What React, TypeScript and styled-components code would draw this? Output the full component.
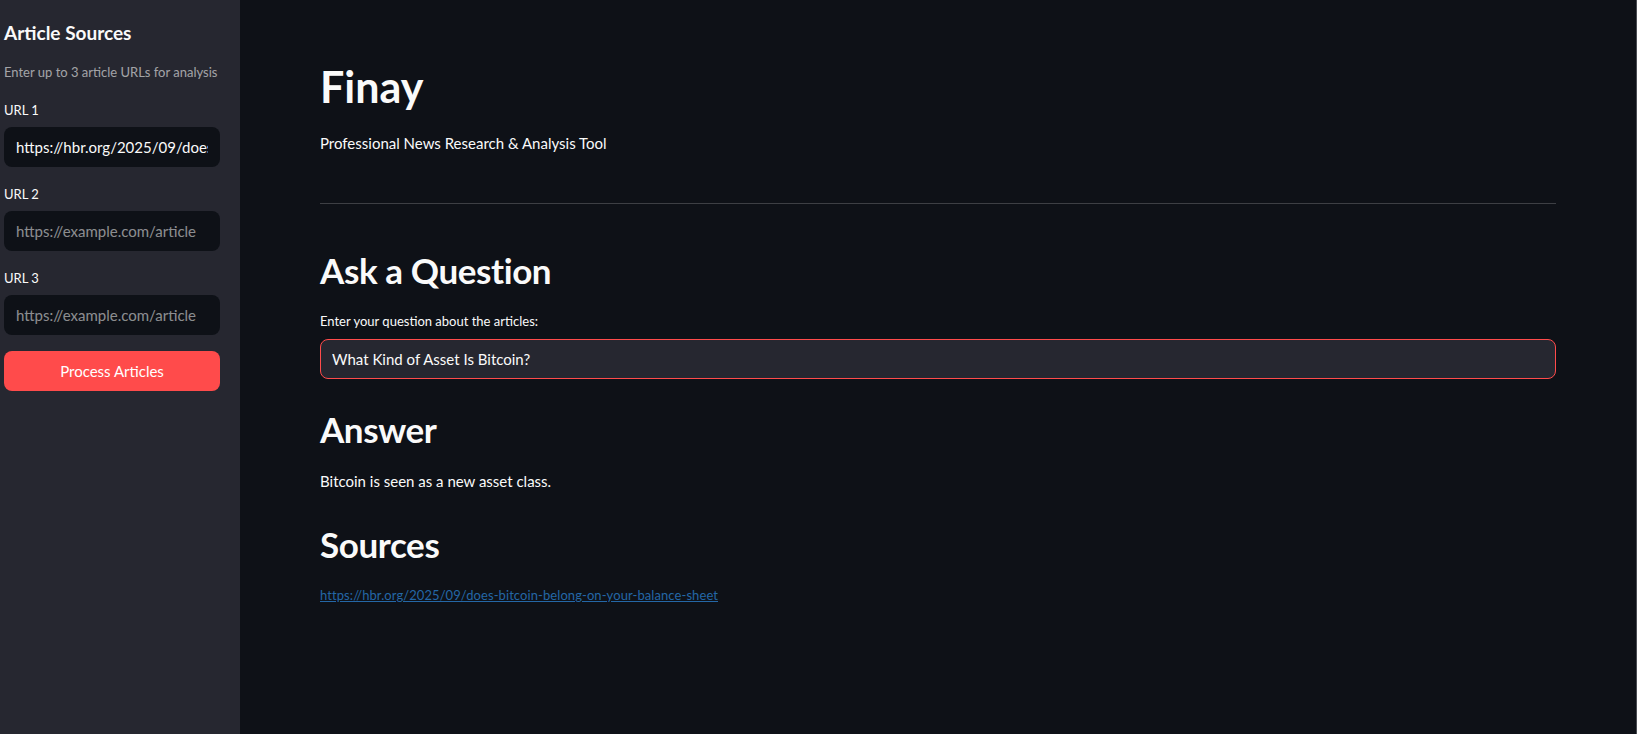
import React from "react";
import styled, { createGlobalStyle } from "styled-components";

const GlobalStyle = createGlobalStyle`
  html, body { margin: 0; padding: 0; background: #0e1117; }
  body { font-family: Lato, "Noto Sans", sans-serif; color: #fafafa; }
  * { box-sizing: border-box; }
`;

const Shell = styled.div`
  display: flex;
  width: 100%;
  height: 734px;
  overflow: hidden;
`;

const Sidebar = styled.aside`
  width: 240px;
  flex: 0 0 240px;
  background: #262730;
  padding: 19px 20px 0 4px;
  display: flex;
  flex-direction: column;
`;

const SideTitle = styled.h2`
  margin: 0;
  font-size: 19px;
  line-height: 28px;
  font-weight: 700;
  color: #fafafa;
`;

const SideCaption = styled.p`
  margin: 13.5px 0 15.5px;
  font-size: 13px;
  line-height: 22px;
  color: rgba(250, 250, 250, 0.6);
  white-space: nowrap;
`;

const Field = styled.div`
  display: flex;
  flex-direction: column;
  gap: 5px;
  margin-bottom: 15px;
`;

const FieldLabel = styled.label`
  font-size: 13px;
  line-height: 24px;
  color: #fafafa;
`;

const SideInput = styled.input`
  height: 40px;
  width: 100%;
  border: none;
  border-radius: 8px;
  background: #0e1117;
  color: #fafafa;
  font-family: inherit;
  font-size: 15px;
  padding: 0 12px;
  outline: none;
  &::placeholder { color: rgba(250, 250, 250, 0.55); }
`;

const PrimaryButton = styled.button`
  margin-top: 1px;
  height: 40px;
  width: 100%;
  border: none;
  border-radius: 8px;
  background: #ff4b4b;
  color: #ffffff;
  font-family: inherit;
  font-size: 15px;
  cursor: pointer;
`;

const Main = styled.main`
  flex: 1;
  padding: 60px 80px 0 80px;
  border-right: 1px solid #4a4c52;
  display: flex;
  flex-direction: column;
`;

const Title = styled.h1`
  margin: 0;
  font-size: 43px;
  line-height: 53px;
  font-weight: 700;
`;

const Text = styled.p<{ $mt: number }>`
  margin: ${(p) => p.$mt}px 0 0;
  font-size: 15px;
  line-height: 24px;
  color: #fafafa;
`;

const Divider = styled.hr`
  margin: 48px 0 0;
  border: none;
  height: 1px;
  background: rgba(250, 250, 250, 0.2);
`;

const Heading = styled.h2<{ $mt: number }>`
  margin: ${(p) => p.$mt}px 0 0;
  font-size: 35px;
  line-height: 43px;
  font-weight: 700;
  letter-spacing: -0.4px;
`;

const QuestionLabel = styled.label`
  margin-top: 17px;
  font-size: 13px;
  line-height: 24px;
`;

const QuestionInput = styled.input`
  margin-top: 6px;
  height: 40px;
  width: 100%;
  border: 1px solid #ff4b4b;
  border-radius: 8px;
  background: #262730;
  color: #fafafa;
  font-family: inherit;
  font-size: 15px;
  padding: 0 11px;
  outline: none;
`;

const SourceLink = styled.a`
  margin-top: 19px;
  font-size: 13px;
  line-height: 20px;
  letter-spacing: 0.08px;
  color: #2467a6;
  text-decoration: underline;
  align-self: flex-start;
`;

export default function App() {
  return (
    <>
      <GlobalStyle />
      <Shell>
        <Sidebar>
          <SideTitle>Article Sources</SideTitle>
          <SideCaption>Enter up to 3 article URLs for analysis</SideCaption>
          <Field>
            <FieldLabel>URL 1</FieldLabel>
            <SideInput defaultValue="https://hbr.org/2025/09/does-bitcoin-belong-on-your-balance-sheet" />
          </Field>
          <Field>
            <FieldLabel>URL 2</FieldLabel>
            <SideInput placeholder="https://example.com/article" />
          </Field>
          <Field>
            <FieldLabel>URL 3</FieldLabel>
            <SideInput placeholder="https://example.com/article" />
          </Field>
          <PrimaryButton>Process Articles</PrimaryButton>
        </Sidebar>
        <Main>
          <Title>Finay</Title>
          <Text $mt={18}>Professional News Research &amp; Analysis Tool</Text>
          <Divider />
          <Heading $mt={45}>Ask a Question</Heading>
          <QuestionLabel>Enter your question about the articles:</QuestionLabel>
          <QuestionInput defaultValue="What Kind of Asset Is Bitcoin?" />
          <Heading $mt={29}>Answer</Heading>
          <Text $mt={18}>Bitcoin is seen as a new asset class.</Text>
          <Heading $mt={30}>Sources</Heading>
          <SourceLink href="#">https://hbr.org/2025/09/does-bitcoin-belong-on-your-balance-sheet</SourceLink>
        </Main>
      </Shell>
    </>
  );
}
